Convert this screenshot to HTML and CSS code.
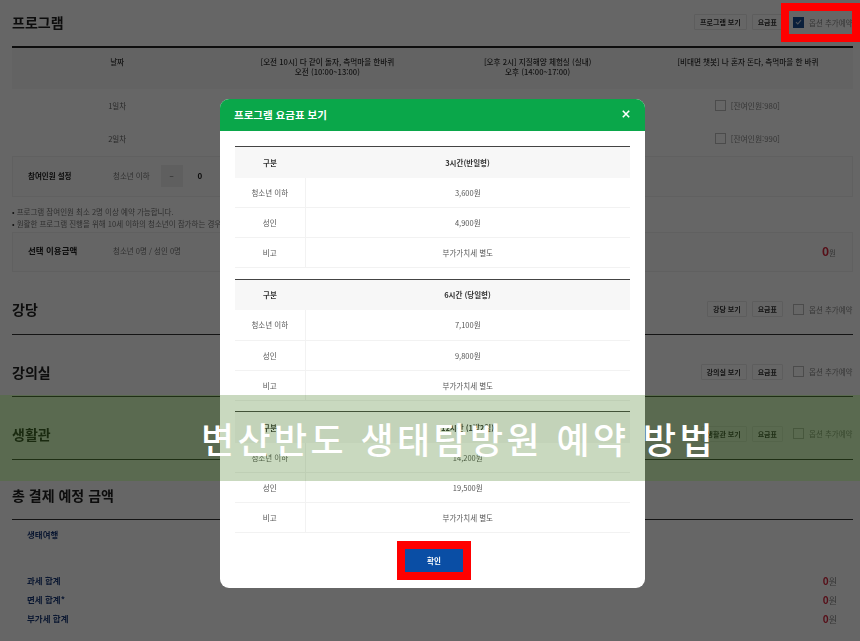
FILE: index.html
```html
<!DOCTYPE html>
<html lang="ko">
<head>
    <meta charset="utf-8">
    <title>프로그램 요금표 보기</title>
    <link rel="stylesheet" href="styles.css">
</head>
<body>
    <div class="page">
        <div class="section-head first">
            <h2>프로그램</h2>
            <div class="actions">
                <span class="btn">프로그램 보기</span>
                <span class="btn">요금표</span>
                <span class="option"><span class="check on"><svg viewBox="0 0 10 10" width="10" height="10"><path d="M2.2 5.2 4.2 7.2 7.8 3" fill="none" stroke="#c9d3e3" stroke-width="1.2"/></svg></span>옵션 추가예약</span>
            </div>
        </div>
        <div class="program-head">
            <div>날짜</div>
            <div>[오전 10시] 다 같이 돌자, 측먹마을 한바퀴<br>오전 (10:00~13:00)</div>
            <div>[오후 2시] 지질해양 체험실 (실내)<br>오후 (14:00~17:00)</div>
            <div>[비대면 챗봇] 나 혼자 돈다, 측먹마을 한 바퀴</div>
        </div>
        <div class="program-row">
            <div>1일차</div><div></div><div></div>
            <div class="remain"><span class="check"></span>[잔여인원:980]</div>
        </div>
        <div class="program-row">
            <div>2일차</div><div></div><div></div>
            <div class="remain"><span class="check"></span>[잔여인원:990]</div>
        </div>
        <div class="box people">
            <strong>참여인원 설정</strong>
            <span class="who">청소년 이하</span>
            <span class="minus">−</span>
            <b class="count">0</b>
        </div>
        <ul class="notes">
            <li>프로그램 참여인원 최소 2명 이상 예약 가능합니다.</li>
            <li>원활한 프로그램 진행을 위해 10세 이하의 청소년이 참가하는 경우</li>
        </ul>
        <div class="box amount">
            <strong>선택 이용금액</strong>
            <span class="who">청소년 0명 / 성인 0명</span>
            <span class="total"><b>0</b>원</span>
        </div>

        <div class="section-head">
            <h2>강당</h2>
            <div class="actions">
                <span class="btn">강당 보기</span>
                <span class="btn">요금표</span>
                <span class="option"><span class="check"></span>옵션 추가예약</span>
            </div>
        </div>
        <div class="section-head">
            <h2>강의실</h2>
            <div class="actions">
                <span class="btn">강의실 보기</span>
                <span class="btn">요금표</span>
                <span class="option"><span class="check"></span>옵션 추가예약</span>
            </div>
        </div>
        <div class="section-head">
            <h2>생활관</h2>
            <div class="actions">
                <span class="btn">생활관 보기</span>
                <span class="btn">요금표</span>
                <span class="option"><span class="check"></span>옵션 추가예약</span>
            </div>
        </div>
        <div class="section-head last">
            <h2>총 결제 예정 금액</h2>
        </div>
        <div class="sum-title">생태여행</div>
        <div class="sum-row"><span>과세 합계</span><span class="won"><b>0</b>원</span></div>
        <div class="sum-row"><span>면세 합계*</span><span class="won"><b>0</b>원</span></div>
        <div class="sum-row"><span>부가세 합계</span><span class="won"><b>0</b>원</span></div>
    </div>

    <div class="dim"></div>

    <div class="modal">
        <div class="modal-head">
            <span>프로그램 요금표 보기</span>
            <svg viewBox="0 0 10 10" width="8" height="8"><path d="M1 1 9 9M9 1 1 9" stroke="#fff" stroke-width="2" fill="none"/></svg>
        </div>
        <div class="modal-body">
            <table class="fee">
                <tr><th>구분</th><th>3시간(반일형)</th></tr>
                <tr><td>청소년 이하</td><td>3,600원</td></tr>
                <tr><td>성인</td><td>4,900원</td></tr>
                <tr><td>비고</td><td>부가가치세 별도</td></tr>
            </table>
            <table class="fee">
                <tr><th>구분</th><th>6시간 (당일형)</th></tr>
                <tr><td>청소년 이하</td><td>7,100원</td></tr>
                <tr><td>성인</td><td>9,800원</td></tr>
                <tr><td>비고</td><td>부가가치세 별도</td></tr>
            </table>
            <table class="fee">
                <tr><th>구분</th><th>12시간 (1박2일)</th></tr>
                <tr><td>청소년 이하</td><td>14,200원</td></tr>
                <tr><td>성인</td><td>19,500원</td></tr>
                <tr><td>비고</td><td>부가가치세 별도</td></tr>
            </table>
            <div class="modal-foot"><span class="ok">확인</span></div>
        </div>
    </div>

    <div class="mark mark-option"></div>
    <div class="mark mark-ok"></div>

    <div class="banner">변산반도 생태탐방원 예약 방법</div>
</body>
</html>
```

FILE: styles.css
```css
* {
    box-sizing: border-box;
}

html, body {
    margin: 0;
    height: 641px;
    overflow: hidden;
}

body {
    position: relative;
    background: #fff;
    font-family: "Noto Sans CJK KR", "Noto Sans", sans-serif;
    color: #222;
}

.page {
    padding: 0 7px 0 12px;
    filter: blur(0.4px);
}

.section-head {
    display: flex;
    align-items: center;
    justify-content: space-between;
    height: 62.3px;
    padding-top: 12px;
    border-bottom: 1px solid #333;
}

.section-head.first {
    height: 48px;
    padding-top: 0;
    padding-bottom: 2px;
    border-bottom: 2px solid #222;
}

.amount + .section-head {
    margin-top: 0.7px;
}

.section-head.last {
    height: 60px;
}

h2 {
    margin: 0;
    font-size: 14px;
    font-weight: 700;
}

.actions {
    display: flex;
    align-items: center;
    gap: 5px;
}

.btn {
    display: flex;
    align-items: center;
    height: 16px;
    padding: 0 5px;
    border: 1px solid #e8e8e8;
    border-radius: 1px;
    font-size: 7px;
    font-weight: 700;
    color: #333;
}

.option {
    display: flex;
    align-items: center;
    gap: 5px;
    width: 60px;
    margin-left: 5px;
    font-size: 7.5px;
    color: #888;
    white-space: nowrap;
}

.check {
    display: inline-flex;
    flex: none;
    align-items: center;
    justify-content: center;
    width: 11px;
    height: 11px;
    border: 1px solid #bbb;
    background: #fff;
}

.check.on {
    border-color: #1a4f94;
    background: #1a4f94;
}

.program-head {
    display: grid;
    grid-template-columns: repeat(4, 1fr);
    align-items: start;
    height: 41px;
    padding-top: 9px;
    background: #f7f7f7;
    font-size: 7.6px;
    line-height: 10px;
    font-weight: 500;
    text-align: center;
    color: #333;
}

.program-row {
    display: grid;
    grid-template-columns: repeat(4, 1fr);
    align-items: center;
    height: 33px;
    font-size: 7.5px;
    text-align: center;
    color: #666;
}

.remain {
    display: flex;
    align-items: center;
    justify-content: flex-start;
    gap: 5px;
    padding-left: 72px;
    font-size: 7.8px;
    color: #888;
}

.box {
    display: flex;
    align-items: center;
    height: 41px;
    padding: 0 16px 2px 15px;
    border: 1px solid #f0f0f0;
    background: #fcfcfc;
    font-size: 7.5px;
}

.box strong {
    width: 85px;
    font-size: 7.5px;
    font-weight: 700;
}

.who {
    color: #777;
}

.minus {
    display: flex;
    align-items: center;
    justify-content: center;
    width: 22px;
    height: 22px;
    margin-left: 11px;
    background: #eee;
    color: #555;
}

.count {
    margin-left: 15px;
    font-size: 8px;
}

.people {
    margin-top: 1px;
}

.notes {
    margin: 9px 0 0;
    padding: 0;
    list-style: none;
    font-size: 7.5px;
    line-height: 12px;
    color: #777;
}

.notes li::before {
    content: "• ";
    color: #333;
}

.amount {
    margin-top: 2px;
    height: 40px;
    padding-bottom: 4px;
}

.amount strong {
    font-size: 8.5px;
}

.total {
    margin-left: auto;
    color: #888;
    font-size: 7.5px;
}

.total b {
    font-size: 12px;
    color: #d7263d;
}

.sum-title {
    margin: 8px 0 31px 15px;
    font-size: 8.5px;
    font-weight: 700;
    color: #1b3a7a;
}

.sum-row {
    display: flex;
    justify-content: space-between;
    height: 19px;
    padding: 0 16px 0 15px;
    align-items: center;
    font-size: 8.5px;
    font-weight: 700;
    color: #1b3a7a;
}

.won {
    font-weight: 400;
    font-size: 9px;
    color: #888;
}

.won b {
    font-size: 10px;
    color: #d7263d;
}

.dim {
    position: absolute;
    inset: 0;
    background: rgba(0, 0, 0, 0.6);
}

.modal {
    position: absolute;
    left: 220px;
    top: 99px;
    width: 425px;
    height: 489px;
    overflow: hidden;
    border-radius: 9px;
    background: #fff;
}

.modal-head {
    display: flex;
    align-items: center;
    justify-content: space-between;
    height: 32px;
    padding: 0 15px 2px 14px;
    background: #0aa74a;
    color: #fff;
    font-size: 10.5px;
    font-weight: 700;
}

.modal-body {
    padding: 15px 15px 0;
    filter: blur(0.3px);
}

.fee {
    width: 395px;
    margin-bottom: 10.5px;
    border-collapse: collapse;
    border-top: 1px solid #444;
    table-layout: fixed;
    font-size: 7.5px;
    text-align: center;
    color: #555;
}

.fee th {
    height: 31px;
    padding: 0;
    background: #f7f7f7;
    font-weight: 700;
    color: #333;
}

.fee td {
    height: 30px;
    padding: 0;
    border-bottom: 1px solid #f2f2f2;
}

.fee th:first-child, .fee td:first-child {
    width: 70px;
}

.fee td:first-child {
    border-right: 1px solid #f2f2f2;
}

.modal-foot {
    display: flex;
    justify-content: center;
    padding: 5px 0 0 3px;
}

.ok {
    display: flex;
    align-items: center;
    justify-content: center;
    width: 58px;
    height: 23px;
    background: #0a4ea5;
    color: #fff;
    font-size: 7.5px;
    font-weight: 700;
}

.mark {
    position: absolute;
    border: 8px solid #f00;
}

.mark-option {
    left: 781px;
    top: 3px;
    width: 79px;
    height: 39px;
}

.mark-ok {
    left: 397px;
    top: 541px;
    width: 74px;
    height: 39px;
}

.banner {
    position: absolute;
    left: 0;
    right: 0;
    top: 395px;
    height: 86px;
    display: flex;
    align-items: center;
    justify-content: center;
    padding-left: 57px;
    background: rgba(60, 118, 25, 0.28);
    color: #fff;
    font-size: 36px;
    font-weight: 500;
    letter-spacing: 3.4px;
    white-space: nowrap;
}
```
